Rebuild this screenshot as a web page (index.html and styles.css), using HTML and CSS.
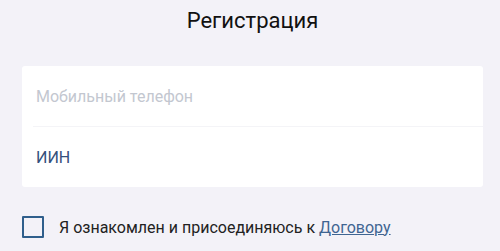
FILE: index.html
```html
<!DOCTYPE html>
<html lang="ru">
<head>
  <meta charset="UTF-8">
  <meta name="viewport" content="width=device-width, initial-scale=1.0">
  <title>Регистрация</title>
  <link rel="stylesheet" href="styles.css">
</head>
<body>

  <div class="container">
    <h1>Регистрация</h1>

    <form class="card">
      <input class="field" type="tel" placeholder="Мобильный телефон">
      <div class="divider"></div>
      <input class="field filled" type="text" value="ИИН">
    </form>

    <label class="agree">
      <span class="box"></span>
      <span>Я ознакомлен и присоединяюсь к <a href="#">Договору</a></span>
    </label>
  </div>

</body>
</html>
```

FILE: styles.css
```css
body {
  font-family: Roboto, Arial, sans-serif;
  margin: 0;
  background: #f3f2f8;
}
.container {
  padding: 0 17px 0 22px;
}
h1 {
  text-align: center;
  font-size: 22px;
  font-weight: 400;
  color: #111;
  margin: 0;
  padding-top: 8px;
  height: 58px;
  line-height: 26px;
}
.card {
  background: #fff;
  border-radius: 3px;
  display: flex;
  flex-direction: column;
}
.field {
  border: none;
  outline: none;
  background: transparent;
  height: 60px;
  padding: 0 14px;
  font-family: inherit;
  font-size: 16px;
  color: #34507c;
}
.field::placeholder {
  color: #c3c7d0;
}
.divider {
  height: 1px;
  margin-left: 11px;
  background: #f4f4f7;
}
.agree {
  display: flex;
  align-items: center;
  gap: 15px;
  margin-top: 29px;
  font-size: 16px;
  color: #222;
}
.box {
  width: 18px;
  height: 18px;
  border: 2px solid #2f5f8c;
  border-radius: 1px;
  flex: none;
}
.agree a {
  color: #3f6592;
}
```
